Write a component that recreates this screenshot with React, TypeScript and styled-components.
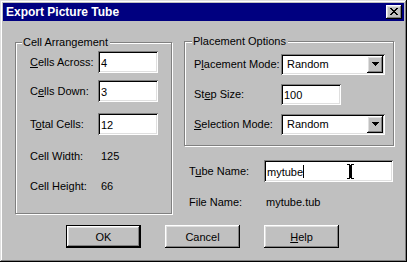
import React from "react";
import styled, { createGlobalStyle } from "styled-components";

const Global = createGlobalStyle`
  html, body { margin: 0; padding: 0; background: #c0c0c0; }
  body { font-family: "Liberation Sans", Arial, sans-serif; font-size: 11px; color: #000; }
  * { box-sizing: border-box; }
`;

const raised = `
  box-shadow: inset -1px -1px #000, inset 1px 1px #fff, inset -2px -2px #808080, inset 2px 2px #dfdfdf;
`;
const sunken = `
  box-shadow: inset 1px 1px #808080, inset -1px -1px #fff, inset 2px 2px #000, inset -2px -2px #dfdfdf;
`;

const Window = styled.div`
  width: 407px;
  height: 262px;
  padding: 3px;
  background: #c0c0c0;
  display: flex;
  flex-direction: column;
  box-shadow: inset -1px -1px #000, inset 1px 1px #dfdfdf, inset -2px -2px #808080, inset 2px 2px #fff;
`;

const TitleBar = styled.div`
  height: 18px;
  background: #000080;
  color: #fff;
  font-weight: bold;
  font-size: 12px;
  display: flex;
  align-items: center;
  justify-content: space-between;
  padding: 0 2px 0 3px;
  flex-shrink: 0;
`;

const CloseButton = styled.div`
  width: 16px;
  height: 14px;
  background: #c0c0c0;
  ${raised}
  display: flex;
  align-items: center;
  justify-content: center;
  padding-bottom: 1px;
`;

const Body = styled.div`
  display: flex;
  flex-direction: column;
`;

const TopArea = styled.div`
  display: flex;
  align-items: flex-start;
`;

const Group = styled.div<{ $w: number; $h: number; $ml: number; $mt: number; $pt: number; $pl: number }>`
  position: relative;
  width: ${(p) => p.$w}px;
  height: ${(p) => p.$h}px;
  margin-left: ${(p) => p.$ml}px;
  margin-top: ${(p) => p.$mt}px;
  padding-top: ${(p) => p.$pt}px;
  padding-left: ${(p) => p.$pl}px;
  border: 1px solid #808080;
  box-shadow: inset 1px 1px #fff, 1px 1px #fff;
  display: flex;
  flex-direction: column;
`;

const Legend = styled.span<{ $left: number }>`
  position: absolute;
  top: -8px;
  left: ${(p) => p.$left}px;
  padding: 0 2px 0 1px;
  background: #c0c0c0;
  line-height: 14px;
`;

const RightColumn = styled.div`
  display: flex;
  flex-direction: column;
  margin-left: 12px;
  width: 210px;
`;

const Row = styled.div<{ $mt: number; $ml?: number }>`
  display: flex;
  align-items: center;
  height: 22px;
  margin-top: ${(p) => p.$mt}px;
  margin-left: ${(p) => p.$ml ?? 0}px;
`;

const Label = styled.span<{ $w: number }>`
  width: ${(p) => p.$w}px;
  flex-shrink: 0;
  white-space: nowrap;
`;

const Value = styled.span`
  padding-left: 3px;
`;

const Field = styled.div<{ $w: number; $h: number }>`
  position: relative;
  width: ${(p) => p.$w}px;
  height: ${(p) => p.$h}px;
  background: #fff;
  ${sunken}
  display: flex;
  align-items: center;
  padding-left: 3px;
  padding-top: 1px;
`;

const Caret = styled.span`
  display: inline-block;
  width: 1px;
  height: 13px;
  background: #000;
  margin-left: 0px;
`;

const IBeam = styled.svg`
  position: absolute;
  left: 83px;
  top: 4px;
`;

const Combo = styled.div`
  width: 104px;
  height: 21px;
  background: #fff;
  ${sunken}
  display: flex;
  align-items: center;
  padding: 2px;
`;

const ComboText = styled.span`
  flex: 1;
  padding-left: 4px;
`;

const ComboButton = styled.div`
  width: 16px;
  height: 17px;
  background: #c0c0c0;
  ${raised}
  display: flex;
  align-items: center;
  justify-content: center;
`;

const ButtonRow = styled.div`
  display: flex;
  gap: 24px;
  margin-top: 11px;
  padding-left: 63px;
`;

const Button = styled.div<{ $default?: boolean }>`
  width: 75px;
  height: 23px;
  background: #c0c0c0;
  display: flex;
  align-items: center;
  justify-content: center;
  ${(p) =>
    p.$default
      ? `box-shadow: inset 0 0 0 1px #000, inset -2px -2px #000, inset 2px 2px #fff, inset -3px -3px #808080, inset 3px 3px #dfdfdf;`
      : raised}
`;

const XIcon = () => {
  const rows = ["11000011", "01100110", "00111100", "00011000", "00111100", "01100110", "11000011"];
  return (
    <svg width="8" height="7" viewBox="0 0 8 7" shapeRendering="crispEdges">
      {rows.flatMap((r, y) =>
        r.split("").map((c, x) => (c === "1" ? <rect key={`${x}-${y}`} x={x} y={y} width="1" height="1" fill="#000" /> : null))
      )}
    </svg>
  );
};

const Arrow = () => (
  <svg width="7" height="4" viewBox="0 0 7 4" shapeRendering="crispEdges">
    <path d="M0 0h7v1h-1v1h-1v1h-1v1h-1v-1h-1v-1h-1v-1h-1z" fill="#000" />
  </svg>
);

const CombоBox = ({ text }: { text: string }) => (
  <Combo>
    <ComboText>{text}</ComboText>
    <ComboButton>
      <Arrow />
    </ComboButton>
  </Combo>
);

export default function App() {
  return (
    <>
      <Global />
      <Window>
        <TitleBar>
          <span>Export Picture Tube</span>
          <CloseButton>
            <XIcon />
          </CloseButton>
        </TitleBar>
        <Body>
          <TopArea>
            <Group $w={157} $h={172} $ml={12} $mt={21} $pt={8} $pl={14}>
              <Legend $left={6}>Cell Arrangement</Legend>
              <Row $mt={0}>
                <Label $w={68}>
                  <u>C</u>ells Across:
                </Label>
                <Field $w={60} $h={22}>4</Field>
              </Row>
              <Row $mt={7}>
                <Label $w={68}>
                  C<u>e</u>lls Down:
                </Label>
                <Field $w={60} $h={22}>3</Field>
              </Row>
              <Row $mt={11}>
                <Label $w={68}>
                  T<u>o</u>tal Cells:
                </Label>
                <Field $w={60} $h={22}>12</Field>
              </Row>
              <Row $mt={10}>
                <Label $w={68}>Cell Width:</Label>
                <Value>125</Value>
              </Row>
              <Row $mt={8}>
                <Label $w={68}>Cell Height:</Label>
                <Value>66</Value>
              </Row>
            </Group>
            <RightColumn>
              <Group $w={210} $h={105} $ml={0} $mt={20} $pt={11} $pl={9}>
                <Legend $left={7}>Placement Options</Legend>
                <Row $mt={0}>
                  <Label $w={87}>
                    P<u>l</u>acement Mode:
                  </Label>
                  <CombоBox text="Random" />
                </Row>
                <Row $mt={8}>
                  <Label $w={87}>
                    St<u>e</u>p Size:
                  </Label>
                  <Field $w={60} $h={21}>100</Field>
                </Row>
                <Row $mt={8}>
                  <Label $w={87}>
                    <u>S</u>election Mode:
                  </Label>
                  <CombоBox text="Random" />
                </Row>
              </Group>
              <Row $mt={14} $ml={5}>
                <Label $w={75}>
                  T<u>u</u>be Name:
                </Label>
                <Field $w={129} $h={22}>
                  mytube
                  <Caret />
                  <IBeam width="7" height="15" viewBox="0 0 7 15" shapeRendering="crispEdges">
                    <path d="M0 0h3v1h1v-1h3v1h-2v13h2v1h-3v-1h-1v1h-3v-1h2v-13h-2z" fill="#000" />
                  </IBeam>
                </Field>
              </Row>
              <Row $mt={9} $ml={5}>
                <Label $w={77}>File Name:</Label>
                <span>mytube.tub</span>
              </Row>
            </RightColumn>
          </TopArea>
          <ButtonRow>
            <Button $default>OK</Button>
            <Button>Cancel</Button>
            <Button>
              <span>
                <u>H</u>elp
              </span>
            </Button>
          </ButtonRow>
        </Body>
      </Window>
    </>
  );
}
